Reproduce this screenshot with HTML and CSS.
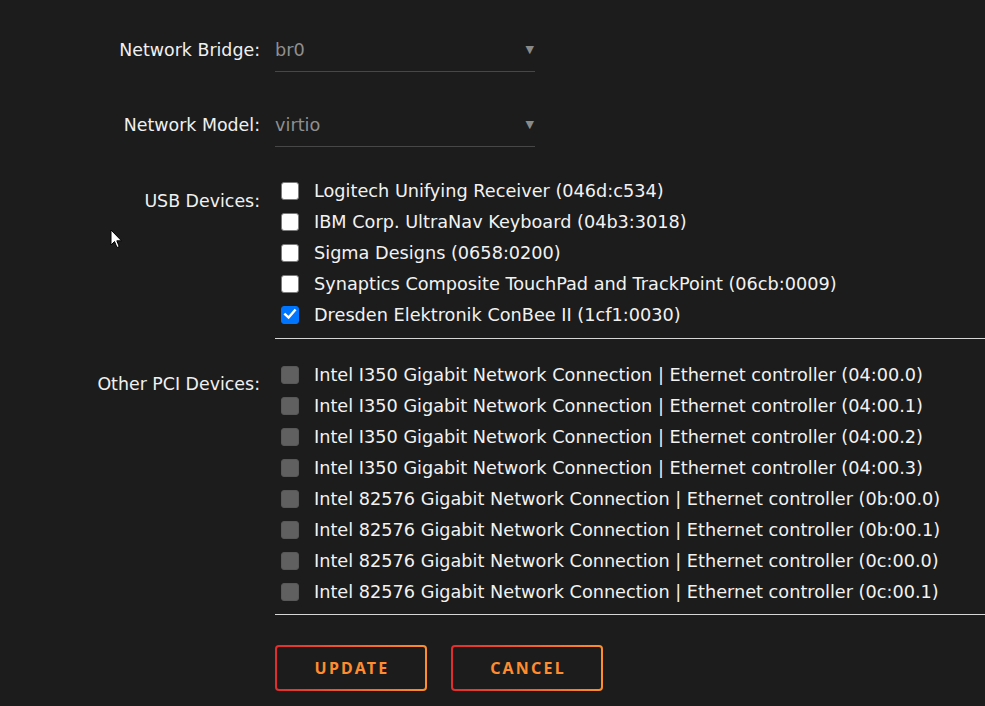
FILE: index.html
```html
<!DOCTYPE html>
<html>
<head>
<meta charset="utf-8">
<link rel="stylesheet" href="styles.css">
</head>
<body>
<div class="form">
  <div class="row row-select">
    <div class="label">Network Bridge:</div>
    <div class="select"><span>br0</span><span class="arrow">&#9660;</span></div>
  </div>
  <div class="row row-select second">
    <div class="label">Network Model:</div>
    <div class="select"><span>virtio</span><span class="arrow">&#9660;</span></div>
  </div>
  <div class="row row-list usb">
    <div class="label list-label">USB Devices:</div>
    <div class="list">
      <label class="item"><span class="cb"></span>Logitech Unifying Receiver (046d:c534)</label>
      <label class="item"><span class="cb"></span>IBM Corp. UltraNav Keyboard (04b3:3018)</label>
      <label class="item"><span class="cb"></span>Sigma Designs (0658:0200)</label>
      <label class="item"><span class="cb"></span>Synaptics Composite TouchPad and TrackPoint (06cb:0009)</label>
      <label class="item"><span class="cb checked"><svg viewBox="0 0 18 18" width="18" height="18"><path d="M4.2 9.4 L7.6 12.6 L13.8 5.4" fill="none" stroke="#fff" stroke-width="2.4" stroke-linecap="square"/></svg></span>Dresden Elektronik ConBee II (1cf1:0030)</label>
    </div>
  </div>
  <div class="row"><div></div><div class="rule"></div></div>
  <div class="row row-list pci">
    <div class="label list-label">Other PCI Devices:</div>
    <div class="list">
      <label class="item"><span class="cb disabled"></span>Intel I350 Gigabit Network Connection | Ethernet controller (04:00.0)</label>
      <label class="item"><span class="cb disabled"></span>Intel I350 Gigabit Network Connection | Ethernet controller (04:00.1)</label>
      <label class="item"><span class="cb disabled"></span>Intel I350 Gigabit Network Connection | Ethernet controller (04:00.2)</label>
      <label class="item"><span class="cb disabled"></span>Intel I350 Gigabit Network Connection | Ethernet controller (04:00.3)</label>
      <label class="item"><span class="cb disabled"></span>Intel 82576 Gigabit Network Connection | Ethernet controller (0b:00.0)</label>
      <label class="item"><span class="cb disabled"></span>Intel 82576 Gigabit Network Connection | Ethernet controller (0b:00.1)</label>
      <label class="item"><span class="cb disabled"></span>Intel 82576 Gigabit Network Connection | Ethernet controller (0c:00.0)</label>
      <label class="item"><span class="cb disabled"></span>Intel 82576 Gigabit Network Connection | Ethernet controller (0c:00.1)</label>
    </div>
  </div>
  <div class="row"><div></div><div class="rule rule2"></div></div>
  <div class="row buttons-row">
    <div></div>
    <div class="buttons">
      <button class="btn">Update</button>
      <button class="btn">Cancel</button>
    </div>
  </div>
</div>
<svg class="cursor" width="13" height="20" viewBox="0 0 13 20"><path d="M1 1 L1 16 L4.5 12.5 L7 18.5 L9.2 17.6 L6.8 11.8 L11.5 11.8 Z" fill="#fff" stroke="#000" stroke-width="1"/></svg>
</body>
</html>
```

FILE: styles.css
```css
html, body {
  margin: 0;
  padding: 0;
  background: #1c1c1c;
  width: 985px;
  height: 706px;
  overflow: hidden;
}
body {
  font-family: "DejaVu Sans", "Noto Sans", sans-serif;
  font-size: 17.7px;
  color: #f2f2f2;
  position: relative;
}
.form {
  padding-top: 38px;
}
.row {
  display: grid;
  grid-template-columns: 260px 710px;
  column-gap: 15px;
}
.label {
  text-align: right;
  line-height: 24px;
  font-size: 17.4px;
  color: #f0f0f0;
  white-space: nowrap;
}
.select {
  width: 260px;
  display: flex;
  justify-content: space-between;
  line-height: 24px;
  padding-bottom: 9px;
  border-bottom: 1px solid #474747;
  color: #8f8f8f;
}
.arrow {
  font-size: 11px;
  color: #8a8a8a;
  margin-right: 1px;
}
.second {
  margin-top: 41px;
}
.usb {
  margin-top: 28px;
}
.list-label {
  padding-top: 14px;
}
.pci .list-label {
  padding-top: 13px;
}
.list {
  display: flex;
  flex-direction: column;
}
.item {
  display: flex;
  align-items: center;
  height: 31px;
  white-space: nowrap;
}
.cb {
  width: 18px;
  height: 18px;
  box-sizing: border-box;
  margin-left: 6px;
  margin-right: 15px;
  border: 1.5px solid #7a7a7a;
  border-radius: 3px;
  background: #fff;
  flex: none;
  position: relative;
}
.cb.checked {
  background: #0075ff;
  border-color: #0075ff;
}
.cb.checked svg {
  position: absolute;
  left: -1.5px;
  top: -1.5px;
}
.cb.disabled {
  background: #606060;
  border-color: #585858;
}
.rule {
  height: 1px;
  background: #d6d6d6;
  margin-top: 8px;
}
.rule2 {
  margin-top: 7px;
}
.pci {
  margin-top: 20px;
}
.buttons-row {
  margin-top: 30px;
}
.buttons {
  display: flex;
  gap: 24px;
}
.btn {
  width: 152px;
  height: 46px;
  box-sizing: border-box;
  border: 2px solid transparent;
  border-radius: 4px;
  background: linear-gradient(#1c1c1c, #1c1c1c) padding-box, linear-gradient(90deg, #e22d2d, #ff8e2b) border-box;
  color: #ff8c2f;
  font-family: "Noto Sans", "Open Sans", sans-serif;
  font-weight: 700;
  font-size: 16px;
  letter-spacing: 2.2px;
  text-transform: uppercase;
  padding: 0 0 0 2px;
  cursor: pointer;
}
.cursor {
  position: absolute;
  left: 110px;
  top: 229px;
}
```
